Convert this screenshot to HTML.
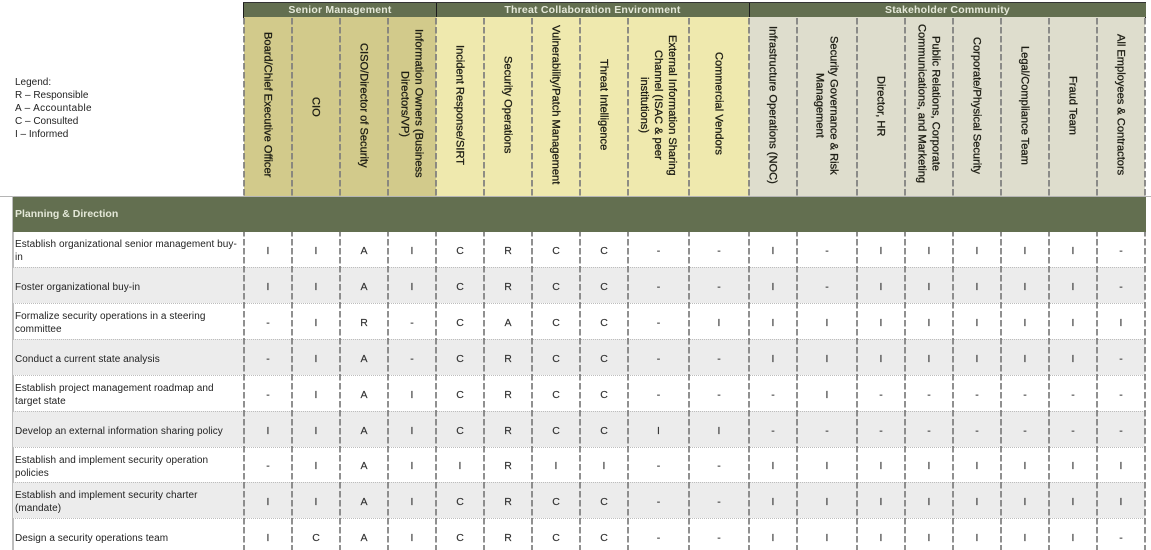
<!DOCTYPE html>
<html lang="en">
<head>
<meta charset="utf-8">
<title>RACI Matrix</title>
<style>
html,body{margin:0;padding:0;background:#fff;width:1151px;height:550px;overflow:hidden}
body{position:relative;font-family:"Liberation Sans",Arial,sans-serif;color:#222}
#w{position:absolute;left:0;top:0;width:1151px;height:550px;overflow:hidden;filter:blur(.3px)}
.abs,.h,.g{position:absolute}
.legend{left:15px;top:76px;font-size:10px;line-height:13px;color:#222}
.g{top:3px;height:14px;background:#636f50;color:#e4e8d8;font-weight:bold;font-size:10.5px;line-height:15px;text-align:center;letter-spacing:.2px}
.h{top:17px;height:179px;box-sizing:border-box;padding-bottom:3px;display:flex;align-items:center;justify-content:center;color:#1d1d14}
.h span{writing-mode:vertical-rl;text-align:center;font-size:11.1px;line-height:14px;-webkit-text-stroke:.3px #1d1d14;white-space:nowrap;display:block;margin-left:-1px}
.s{background:#d2ca8b}.t{background:#efe9ae}.c{background:#deddcd}
table{position:absolute;left:13px;top:232px;border-collapse:collapse;table-layout:fixed;width:1132px}
tr{height:36px}
tr.n{height:35px}
td{padding:4px 0 0;box-sizing:border-box;text-align:center;font-size:10.5px;line-height:13px;color:#333;-webkit-text-stroke:.15px #333;border-bottom:1px dotted #bdbdbd;vertical-align:middle}
td:first-child{text-align:left;font-size:10px;padding:4px 4px 0 2px;color:#222;letter-spacing:.06px;-webkit-text-stroke:0}
tr:nth-child(even) td{background:#ececec}
</style>
</head>
<body>
<div id="w">
<div class="abs legend">Legend:<br>R – Responsible<br><span style="letter-spacing:.35px">A – Accountable</span><br>C – Consulted<br>I – Informed</div>

<div class="abs" style="left:0;top:196px;width:1151px;height:1px;background:#b5b5b5"></div>
<div class="abs" style="left:12px;top:196px;width:2px;height:354px;background:#bdbdbd"></div>

<div class="abs" style="left:243px;top:2px;width:903px;height:1px;background:#333"></div>
<div class="g" style="left:244px;width:192px">Senior Management</div>
<div class="g" style="left:436px;width:313px">Threat Collaboration Environment</div>
<div class="g" style="left:749px;width:397px">Stakeholder Community</div>
<div class="abs" style="left:243px;top:17px;width:903px;height:1px;background:#1c1c1c"></div>
<div class="abs" style="left:243px;top:3px;width:1px;height:14px;background:#1c1c1c"></div>
<div class="abs" style="left:436px;top:3px;width:1px;height:14px;background:#1c1c1c"></div>
<div class="abs" style="left:749px;top:3px;width:1px;height:14px;background:#1c1c1c"></div>

<div class="h s" style="left:244px;width:48px"><span>Board/Chief Executive Officer</span></div>
<div class="h s" style="left:292px;width:48px;padding-bottom:0"><span>CIO</span></div>
<div class="h s" style="left:340px;width:48px"><span>CISO/Director of Security</span></div>
<div class="h s" style="left:388px;width:48px;padding-bottom:6px"><span>Information Owners (Business<br>Directors/VP)</span></div>
<div class="h t" style="left:436px;width:48px"><span>Incident Response/SIRT</span></div>
<div class="h t" style="left:484px;width:48px"><span>Security Operations</span></div>
<div class="h t" style="left:532px;width:48px"><span>Vulnerability/Patch Management</span></div>
<div class="h t" style="left:580px;width:48px"><span>Threat Intelligence</span></div>
<div class="h t" style="left:628px;width:61px"><span>External Information Sharing<br>Channel (ISAC &amp; peer<br>institutions)</span></div>
<div class="h t" style="left:689px;width:60px;padding-bottom:6px"><span>Commercial Vendors</span></div>
<div class="h c" style="left:749px;width:48px"><span>Infrastructure Operations (NOC)</span></div>
<div class="h c" style="left:797px;width:60px"><span>Security Governance &amp; Risk<br>Management</span></div>
<div class="h c" style="left:857px;width:48px;padding-bottom:1px"><span>Director, HR</span></div>
<div class="h c" style="left:905px;width:48px;padding-bottom:5px"><span>Public Relations, Corporate<br>Communications, and Marketing</span></div>
<div class="h c" style="left:953px;width:48px"><span>Corporate/Physical Security</span></div>
<div class="h c" style="left:1001px;width:48px"><span>Legal/Compliance Team</span></div>
<div class="h c" style="left:1049px;width:48px"><span>Fraud Team</span></div>
<div class="h c" style="left:1097px;width:48px"><span>All Employees &amp; Contractors</span></div>

<div class="abs" style="left:13px;top:197px;width:1133px;height:35px;background:#636f50;color:#e4e8d8;font-weight:bold;font-size:10.5px;line-height:35px;padding-left:2px;box-sizing:border-box">Planning &amp; Direction</div>

<table>
<colgroup><col style="width:231px"><col style="width:48px"><col style="width:48px"><col style="width:48px"><col style="width:48px"><col style="width:48px"><col style="width:48px"><col style="width:48px"><col style="width:48px"><col style="width:61px"><col style="width:60px"><col style="width:48px"><col style="width:60px"><col style="width:48px"><col style="width:48px"><col style="width:48px"><col style="width:48px"><col style="width:48px"><col style="width:48px"></colgroup>
<tr class="n"><td>Establish organizational senior management buy-in</td><td>I</td><td>I</td><td>A</td><td>I</td><td>C</td><td>R</td><td>C</td><td>C</td><td>-</td><td>-</td><td>I</td><td>-</td><td>I</td><td>I</td><td>I</td><td>I</td><td>I</td><td>-</td></tr>
<tr><td>Foster organizational buy-in</td><td>I</td><td>I</td><td>A</td><td>I</td><td>C</td><td>R</td><td>C</td><td>C</td><td>-</td><td>-</td><td>I</td><td>-</td><td>I</td><td>I</td><td>I</td><td>I</td><td>I</td><td>-</td></tr>
<tr><td>Formalize security operations in a steering committee</td><td>-</td><td>I</td><td>R</td><td>-</td><td>C</td><td>A</td><td>C</td><td>C</td><td>-</td><td>I</td><td>I</td><td>I</td><td>I</td><td>I</td><td>I</td><td>I</td><td>I</td><td>I</td></tr>
<tr><td>Conduct a current state analysis</td><td>-</td><td>I</td><td>A</td><td>-</td><td>C</td><td>R</td><td>C</td><td>C</td><td>-</td><td>-</td><td>I</td><td>I</td><td>I</td><td>I</td><td>I</td><td>I</td><td>I</td><td>-</td></tr>
<tr><td>Establish project management roadmap and target state</td><td>-</td><td>I</td><td>A</td><td>I</td><td>C</td><td>R</td><td>C</td><td>C</td><td>-</td><td>-</td><td>-</td><td>I</td><td>-</td><td>-</td><td>-</td><td>-</td><td>-</td><td>-</td></tr>
<tr><td>Develop an external information sharing policy</td><td>I</td><td>I</td><td>A</td><td>I</td><td>C</td><td>R</td><td>C</td><td>C</td><td>I</td><td>I</td><td>-</td><td>-</td><td>-</td><td>-</td><td>-</td><td>-</td><td>-</td><td>-</td></tr>
<tr class="n"><td>Establish and implement security operation policies</td><td>-</td><td>I</td><td>A</td><td>I</td><td>I</td><td>R</td><td>I</td><td>I</td><td>-</td><td>-</td><td>I</td><td>I</td><td>I</td><td>I</td><td>I</td><td>I</td><td>I</td><td>I</td></tr>
<tr><td>Establish and implement security charter (mandate)</td><td>I</td><td>I</td><td>A</td><td>I</td><td>C</td><td>R</td><td>C</td><td>C</td><td>-</td><td>-</td><td>I</td><td>I</td><td>I</td><td>I</td><td>I</td><td>I</td><td>I</td><td>I</td></tr>
<tr><td>Design a security operations team</td><td>I</td><td>C</td><td>A</td><td>I</td><td>C</td><td>R</td><td>C</td><td>C</td><td>-</td><td>-</td><td>I</td><td>I</td><td>I</td><td>I</td><td>I</td><td>I</td><td>I</td><td>-</td></tr>
</table>

<svg class="abs" style="left:0;top:0" width="1151" height="550" viewBox="0 0 1151 550" fill="none">
<path stroke="#7d7d7d" stroke-width="1.7" stroke-dasharray="6.5 2.5" d="M244 18V196M292 18V196M340 18V196M388 18V196M436 18V196M484 18V196M532 18V196M580 18V196M628 18V196M689 18V196M749 18V196M797 18V196M857 18V196M905 18V196M953 18V196M1001 18V196M1049 18V196M1097 18V196M1145 18V196"/>
<path stroke="#7d7d7d" stroke-width="1.7" stroke-dasharray="6.5 2.5" stroke-dashoffset="2" d="M244 232V550M292 232V550M340 232V550M388 232V550M436 232V550M484 232V550M532 232V550M580 232V550M628 232V550M689 232V550M749 232V550M797 232V550M857 232V550M905 232V550M953 232V550M1001 232V550M1049 232V550M1097 232V550M1145 232V550"/>
</svg>
</div>
</body>
</html>
